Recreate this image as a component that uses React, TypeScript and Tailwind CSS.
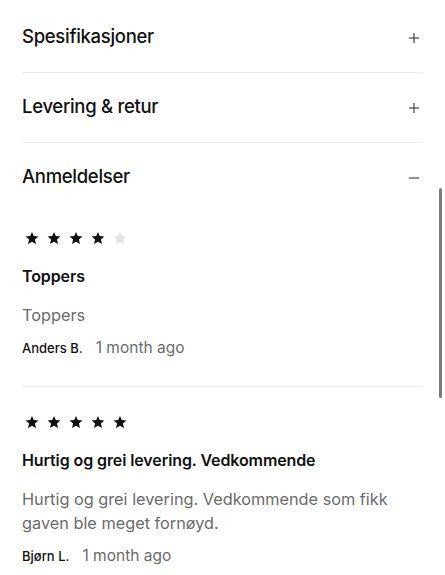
import { Plus, Minus } from "lucide-react"

interface Review {
  rating: number
  title: string
  body: string
  author: string
  time: string
}

const reviews: Review[] = [
  { rating: 4, title: "Toppers", body: "Toppers", author: "Anders B.", time: "1 month ago" },
  {
    rating: 5,
    title: "Hurtig og grei levering. Vedkommende",
    body: "Hurtig og grei levering. Vedkommende som fikk gaven ble meget fornøyd.",
    author: "Bjørn L.",
    time: "1 month ago",
  },
]

function Star({ filled }: { filled: boolean }) {
  return (
    <svg width="14" height="14" viewBox="0 0 24 24" className={filled ? "text-[#111]" : "text-[#e2e2e2]"}>
      <path
        fill="currentColor"
        d="M12 1.5l3.09 7.26 7.91.68-6 5.2 1.8 7.73L12 18.27 5.2 22.37 7 14.64l-6-5.2 7.91-.68z"
      />
    </svg>
  )
}

function AccordionHeader({ title, open }: { title: string; open?: boolean }) {
  return (
    <div className={`h-[70px] flex items-center justify-between ${open ? "" : "border-b border-[#ececec]"}`}>
      <span className="text-[18.5px] font-medium text-[#111] tracking-[-0.3px] -mt-[2px]">{title}</span>
      {open ? (
        <Minus className="h-4 w-4 mr-[1px] text-[#222]" strokeWidth={1.5} />
      ) : (
        <Plus className="h-4 w-4 mr-[1px] text-[#222]" strokeWidth={1.5} />
      )}
    </div>
  )
}

export default function App() {
  return (
    <div className="relative w-[445px] h-[575px] overflow-hidden bg-white font-['Inter',sans-serif]">
      <div className="px-[22px] pt-[3px]">
        <AccordionHeader title="Spesifikasjoner" />
        <AccordionHeader title="Levering & retur" />
        <AccordionHeader title="Anmeldelser" open />

        {/* Anmeldelser */}
        <div>
          {reviews.map((r, i) => (
            <div
              key={i}
              className={`${i === 0 ? "pt-[18px]" : "pt-[28px]"} pb-[26px] border-b border-[#ececec]`}
            >
              <div className="flex gap-2 pl-[3px]">
                {[0, 1, 2, 3, 4].map((s) => (
                  <Star key={s} filled={s < r.rating} />
                ))}
              </div>
              <h3 className="mt-[21px] text-[16px] leading-5 font-semibold text-[#111] tracking-[-0.1px]">{r.title}</h3>
              <p className="mt-[17px] text-[16.3px] leading-6 text-[#6b6b6b]">{r.body}</p>
              <div className="mt-[9px] flex items-center gap-[13px] leading-6">
                <span className="text-[13px] font-medium text-[#111]">{r.author}</span>
                <span className="text-[15.5px] text-[#6b6b6b]">{r.time}</span>
              </div>
            </div>
          ))}
        </div>
      </div>

      {/* scroll indicator */}
      <div className="absolute left-[439px] top-[188px] h-[210px] w-[3px] rounded-full bg-[#7a7a7a]" />
    </div>
  )
}
